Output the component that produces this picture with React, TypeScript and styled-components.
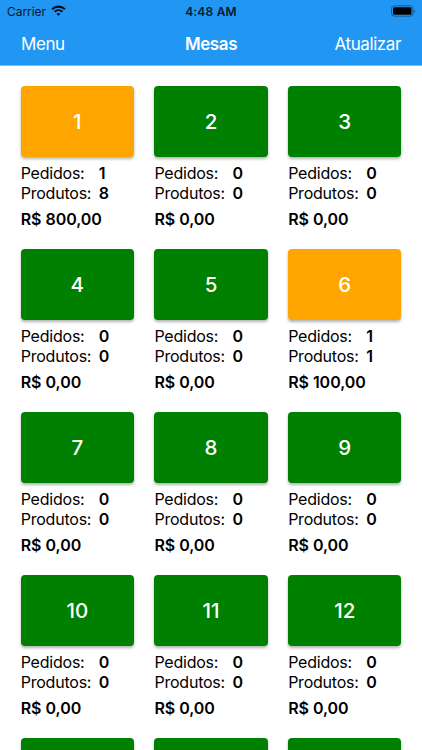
import React from "react";
import styled, { createGlobalStyle } from "styled-components";

const Global = createGlobalStyle`
  * { box-sizing: border-box; }
  body { margin: 0; overflow: hidden; background: #fff; font-family: Inter, sans-serif; }
`;
const Screen = styled.div`
  width: 422px;
  height: 750px;
  overflow: hidden;
  background: #fff;
`;
const Header = styled.header`
  height: 66px;
  background: #2196f3;
  border-bottom: 1px solid #7cc0f8;
`;
const StatusBar = styled.div`
  display: grid;
  grid-template-columns: 1fr auto 1fr;
  align-items: center;
  height: 22px;
  padding: 0 6px 0 7px;
  font-size: 12px;
  color: #06192b;
`;
const Carrier = styled.div`
  display: flex;
  align-items: center;
  gap: 5px;
  letter-spacing: -0.05px;
`;
const Clock = styled.div`
  font-weight: 600;
  letter-spacing: 0.2px;
  margin-right: 1px;
`;
const WifiIcon = styled.svg`
  width: 15px;
  height: 11px;
  margin-top: -1px;
`;
const BatteryIcon = styled.svg`
  justify-self: end;
  width: 25px;
  height: 12px;
  margin-top: -1px;
`;
const NavBar = styled.nav`
  display: grid;
  grid-template-columns: 1fr auto 1fr;
  align-items: center;
  height: 43px;
  padding: 0 21px;
  color: #fff;
  font-size: 17px;
  letter-spacing: -0.4px;
`;
const NavAction = styled.span<{ $end?: boolean }>`
  text-align: ${(p) => (p.$end ? "right" : "left")};
`;
const Title = styled.span`
  font-weight: 600;
`;
const Grid = styled.main`
  display: grid;
  grid-template-columns: repeat(3, 113.2px);
  justify-content: space-between;
  grid-auto-rows: 163px;
  padding: 20px 20.7px 0;
`;
const Tile = styled.div<{ $busy?: boolean }>`
  display: flex;
  align-items: center;
  justify-content: center;
  height: 71px;
  border-radius: 4px;
  background: ${(p) => (p.$busy ? "#ffa500" : "#008000")};
  box-shadow: 0 2px 3px rgba(0, 0, 0, 0.3);
  color: #fff;
  font-size: 20.5px;
  font-weight: 550;
`;
const Stats = styled.div`
  display: grid;
  grid-template-columns: 78px auto;
  grid-auto-rows: 20px;
  align-items: center;
  margin-top: 6px;
  font-size: 16px;
  color: #000;
`;
const Label = styled.span`
  letter-spacing: -0.22px;
`;
const Count = styled.span`
  font-weight: 600;
`;
const Total = styled.div`
  margin-top: 6px;
  line-height: 20px;
  font-size: 16px;
  font-weight: 600;
  letter-spacing: -0.04px;
`;

const busy: Record<number, [number, number, string]> = {
  1: [1, 8, "800,00"],
  6: [1, 1, "100,00"],
};

export default function App() {
  return (
    <Screen>
      <Global />
      <Header>
        <StatusBar>
          <Carrier>
            Carrier
            <WifiIcon viewBox="0 0 15 11" fill="none" stroke="#06111c">
              <path d="M1.1 4.2C4.8.7 10.2.7 13.9 4.2" strokeWidth="2.1" />
              <path d="M3.6 6.8C5.9 4.7 9.1 4.7 11.4 6.8" strokeWidth="2" />
              <path d="M7.5 10.8 5.4 8.7C6.6 7.6 8.4 7.6 9.6 8.7Z" fill="#06111c" stroke="none" />
            </WifiIcon>
          </Carrier>
          <Clock>4:48 AM</Clock>
          <BatteryIcon viewBox="0 0 25 12">
            <rect x="0.5" y="0.8" width="21.5" height="10.4" rx="2.9" fill="none" stroke="#155a92" />
            <rect x="2" y="2.3" width="18.5" height="7.4" rx="1.5" fill="#000" />
            <path d="M23.2 4.3c1.4.5 1.4 2.9 0 3.4Z" fill="#155a92" />
          </BatteryIcon>
        </StatusBar>
        <NavBar>
          <NavAction>Menu</NavAction>
          <Title>Mesas</Title>
          <NavAction $end>Atualizar</NavAction>
        </NavBar>
      </Header>
      <Grid>
        {Array.from({ length: 12 }, (_, i) => {
          const [orders, products, total] = busy[i + 1] ?? [0, 0, "0,00"];
          return (
            <section key={i}>
              <Tile $busy={orders > 0}>{i + 1}</Tile>
              <Stats>
                <Label>Pedidos:</Label>
                <Count>{orders}</Count>
                <Label>Produtos:</Label>
                <Count>{products}</Count>
              </Stats>
              <Total>R$ {total}</Total>
            </section>
          );
        })}
        <Tile />
        <Tile />
        <Tile />
      </Grid>
    </Screen>
  );
}
